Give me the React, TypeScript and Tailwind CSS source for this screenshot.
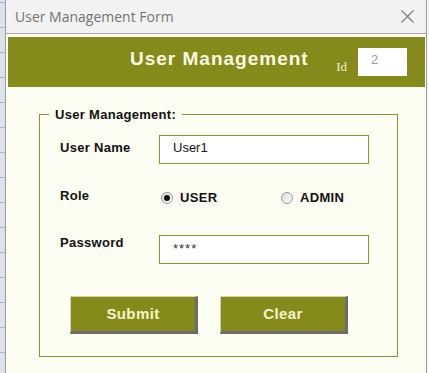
import React from 'react';

/** 뒤에 깔린 시트의 눈금 줄 */
const gridTicks = Array.from({ length: 15 });

/** 라디오 버튼 한 개 */
const Radio: React.FC<{ checked?: boolean; label: string }> = ({ checked, label }) => (
  <div className="flex items-center">
    <span className="flex h-[12px] w-[12px] items-center justify-center rounded-full border border-[#9a9a9a] bg-gradient-to-br from-[#d9d9d9] to-white">
      {checked && <span className="h-[6px] w-[6px] rounded-full bg-[#111]" />}
    </span>
    <span className="ml-[7px] text-[13px] font-bold leading-[15px] tracking-[0.3px] text-[#111]">{label}</span>
  </div>
);

const OliveButton: React.FC<{ children: React.ReactNode }> = ({ children }) => (
  <button
    type="button"
    className="flex h-[38px] w-[128px] items-center justify-center border-t border-l border-r-[3px] border-b-[3px] border-t-[#d3d5ad] border-l-[#d3d5ad] border-r-[#6c6c6c] border-b-[#6c6c6c] bg-[#858b1a] text-[15px] font-bold tracking-[0.4px] text-[#f6f3c8]"
  >
    {children}
  </button>
);

export default function App() {
  return (
    <div className="flex h-[373px] w-[429px] overflow-hidden bg-[#f7f8fa] font-['Liberation_Sans',Arial,sans-serif]">
      {/* 왼쪽 시트 가장자리 */}
      <div className="flex w-[5px] shrink-0 flex-col bg-[#dde2ea] pt-[2px]">
        {gridTicks.map((_, i) => (
          <div key={i} className="h-[25px] shrink-0 border-t border-[#9dbbe0]" />
        ))}
      </div>

      {/* 폼 창 */}
      <div className="flex w-[422px] shrink-0 flex-col border-x border-[#9c9c9c] bg-[#fcfdf3]">
        <div className="flex h-[34px] shrink-0 items-center justify-between border-b border-[#a8a8a8] bg-[#f2f2f2] pl-[9px] pr-[12px]">
          <span className="font-['Open_Sans',sans-serif] text-[14px] text-[#727272]">User Management Form</span>
          <svg width="13" height="13" viewBox="0 0 13 13">
            <path d="M0.5 0.5L12.5 12.5M12.5 0.5L0.5 12.5" stroke="#7a7a7a" strokeWidth="1.1" fill="none" />
          </svg>
        </div>

        <div className="pl-[2px] pr-[1px] pt-[3px]">
          {/* 헤더 */}
          <div className="flex h-[50px] items-center bg-[#858b1a] pl-[122px] pr-[18px]">
            <span className="mb-[6px] text-[19px] font-bold tracking-[1px] text-[#fbfbe2]">User Management</span>
            <span className="ml-auto mr-[11px] mt-[10px] font-['Liberation_Serif',serif] text-[13px] text-[#f3f3d5]">Id</span>
            <div className="h-[28px] w-[49px] bg-white pl-[13px] pt-[4px] text-[13px] leading-[15px] text-[#9a9a9a]">2</div>
          </div>
        </div>

        {/* 입력 영역 */}
        <fieldset className="ml-[33px] mt-[20px] h-[250px] w-[359px] border border-[#8c9132] p-0">
          <legend className="ml-[9px] px-[6px] text-[13px] font-bold leading-[15px] tracking-[0.3px] text-[#111]">
            User Management:
          </legend>

          <div className="flex flex-col pl-[20px] pt-[13px]">
            <div className="flex items-start">
              <span className="w-[99px] pt-[5px] text-[13px] font-bold leading-[15px] tracking-[0.3px] text-[#111]">User Name</span>
              <div className="h-[29px] w-[210px] border border-[#8c9132] bg-white pl-[13px] pt-[4px] text-[13px] leading-[15px] text-[#111]">
                User1
              </div>
            </div>

            <div className="mt-[24px] flex h-[17px] items-start">
              <span className="w-[99px] text-[13px] font-bold leading-[15px] tracking-[0.3px] text-[#111]">Role</span>
              <div className="ml-[2px] mt-[2px] flex">
                <div className="w-[120px]">
                  <Radio checked label="USER" />
                </div>
                <Radio label="ADMIN" />
              </div>
            </div>

            <div className="mt-[30px] flex items-start">
              <span className="w-[99px] text-[13px] font-bold leading-[15px] tracking-[0.3px] text-[#111]">Password</span>
              <div className="h-[29px] w-[210px] border border-[#8c9132] bg-white pl-[13px] pt-[5px] text-[13px] leading-[15px] tracking-[1px] text-[#333]">
                ****
              </div>
            </div>

            <div className="ml-[10px] mt-[32px] flex gap-[22px]">
              <OliveButton>Submit</OliveButton>
              <OliveButton>Clear</OliveButton>
            </div>
          </div>
        </fieldset>
      </div>
    </div>
  );
}
